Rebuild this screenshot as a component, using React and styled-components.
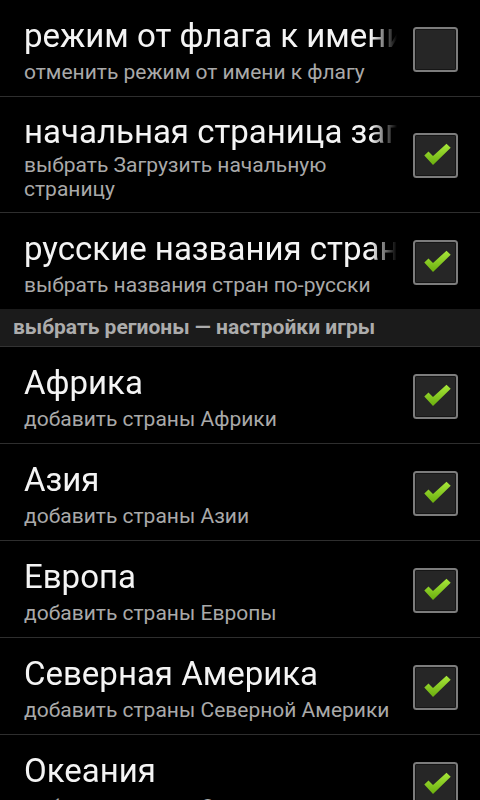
import styled, { createGlobalStyle } from "styled-components";

const GlobalStyle = createGlobalStyle`
	html, body {
		margin: 0;
		padding: 0;
		background: #000;
		overflow: hidden;
	}
	body {
		font-family: Roboto, "Noto Sans", "DejaVu Sans", sans-serif;
	}
`;

const Screen = styled.div`
	width: 480px;
	height: 800px;
	overflow: hidden;
	background: #000;
	display: flex;
	flex-direction: column;
`;

const Row = styled.div`
	box-sizing: border-box;
	min-height: ${(p) => (p.$last ? "96px" : "97px")};
	display: flex;
	align-items: center;
	padding: 13px 22px 11px 24px;
	border-bottom: ${(p) => (p.$last ? "none" : "1px solid #2e2e2e")};
	flex-shrink: 0;
`;

const Text = styled.div`
	flex: 1;
	min-width: 0;
	display: flex;
	flex-direction: column;
`;

const Title = styled.div`
	padding-top: 2px;
	font-size: 33px;
	line-height: 40px;
	color: #f4f4f4;
	white-space: nowrap;
	overflow: hidden;
	-webkit-mask-image: linear-gradient(to right, #000 calc(100% - 26px), transparent);
	mask-image: linear-gradient(to right, #000 calc(100% - 26px), transparent);
`;

const Summary = styled.div`
	margin-top: ${(p) => (p.$multi ? "1px" : "4px")};
	font-size: 21px;
	line-height: 24px;
	color: #a9a9a9;
`;

const Widget = styled.div`
	margin-left: 16px;
	width: 45px;
	height: 45px;
	flex-shrink: 0;
	display: flex;
`;

const Header = styled.div`
	box-sizing: border-box;
	height: 38px;
	flex-shrink: 0;
	background: #1b1b1b;
	border-bottom: 1px solid #333;
	padding: 0 13px;
	font-size: 21px;
	font-weight: bold;
	line-height: 37px;
	color: #acacac;
	white-space: nowrap;
`;

const CheckBox = ({ checked }) => (
	<svg width="45" height="45" viewBox="0 0 45 45">
		<defs>
			<linearGradient id="chk" x1="0" y1="0" x2="0" y2="1">
				<stop offset="0" stopColor="#a8e83a" />
				<stop offset="1" stopColor="#6aae0e" />
			</linearGradient>
		</defs>
		<rect x="1" y="1" width="43" height="43" rx="2.5" fill="#262626" stroke="#7c7c7c" strokeWidth="2" />
		<rect x="2.5" y="2.5" width="40" height="40" rx="1" fill="none" stroke="#161616" strokeWidth="1" />
		{checked && (
			<polygon
				points="11.3,22.5 15.5,18.5 20,23 33.5,10.7 37.7,14.7 20,32"
				fill="url(#chk)"
			/>
		)}
	</svg>
);

const Pref = ({ title, summary, checked, last, multi }) => (
	<Row $last={last}>
		<Text>
			<Title>{title}</Title>
			<Summary $multi={multi}>{summary}</Summary>
		</Text>
		<Widget>
			<CheckBox checked={checked} />
		</Widget>
	</Row>
);

const general = [
	{ title: "режим от флага к имени", summary: "отменить режим от имени к флагу", checked: false },
	{ title: "начальная страница загрузки", summary: "выбрать Загрузить начальную страницу", checked: true, multi: true },
	{ title: "русские названия стран", summary: "выбрать названия стран по-русски", checked: true, last: true },
];

const regions = [
	{ title: "Африка", summary: "добавить страны Африки" },
	{ title: "Азия", summary: "добавить страны Азии" },
	{ title: "Европа", summary: "добавить страны Европы" },
	{ title: "Северная Америка", summary: "добавить страны Северной Америки" },
	{ title: "Океания", summary: "добавить страны Океании" },
];

export default function App() {
	return (
		<Screen>
			<GlobalStyle />
			{general.map((p) => (
				<Pref key={p.title} {...p} />
			))}
			<Header>выбрать регионы — настройки игры</Header>
			{regions.map((p) => (
				<Pref key={p.title} {...p} checked />
			))}
		</Screen>
	);
}
